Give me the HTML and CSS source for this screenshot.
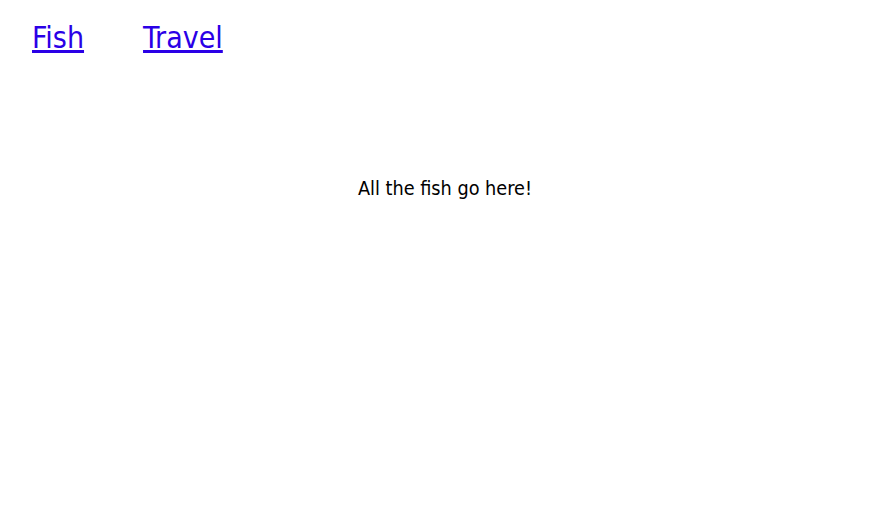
FILE: index.html
```html
<!DOCTYPE html>
<html>
<head>
<meta charset="utf-8">
<link rel="stylesheet" href="styles.css">
</head>
<body>
<nav class="nav">
  <a class="nav-link" href="#">Fish</a>
  <a class="nav-link" href="#">Travel</a>
</nav>
<main class="content">
  <p class="message">All the fish go here!</p>
</main>
</body>
</html>
```

FILE: styles.css
```css
body {
  margin: 0;
  background: #ffffff;
  font-family: "DejaVu Sans Condensed", "DejaVu Sans", sans-serif;
}
.nav {
  display: flex;
  gap: 59px;
  padding: 20px 32px 0;
}
.nav-link {
  font-size: 30px;
  line-height: 36px;
  color: #2a00e6;
  text-decoration: underline;
}
.content {
  display: flex;
  justify-content: center;
  padding-top: 121px;
}
.message {
  margin: 0;
  font-size: 19.7px;
  line-height: 24px;
  color: #000;
}
```
